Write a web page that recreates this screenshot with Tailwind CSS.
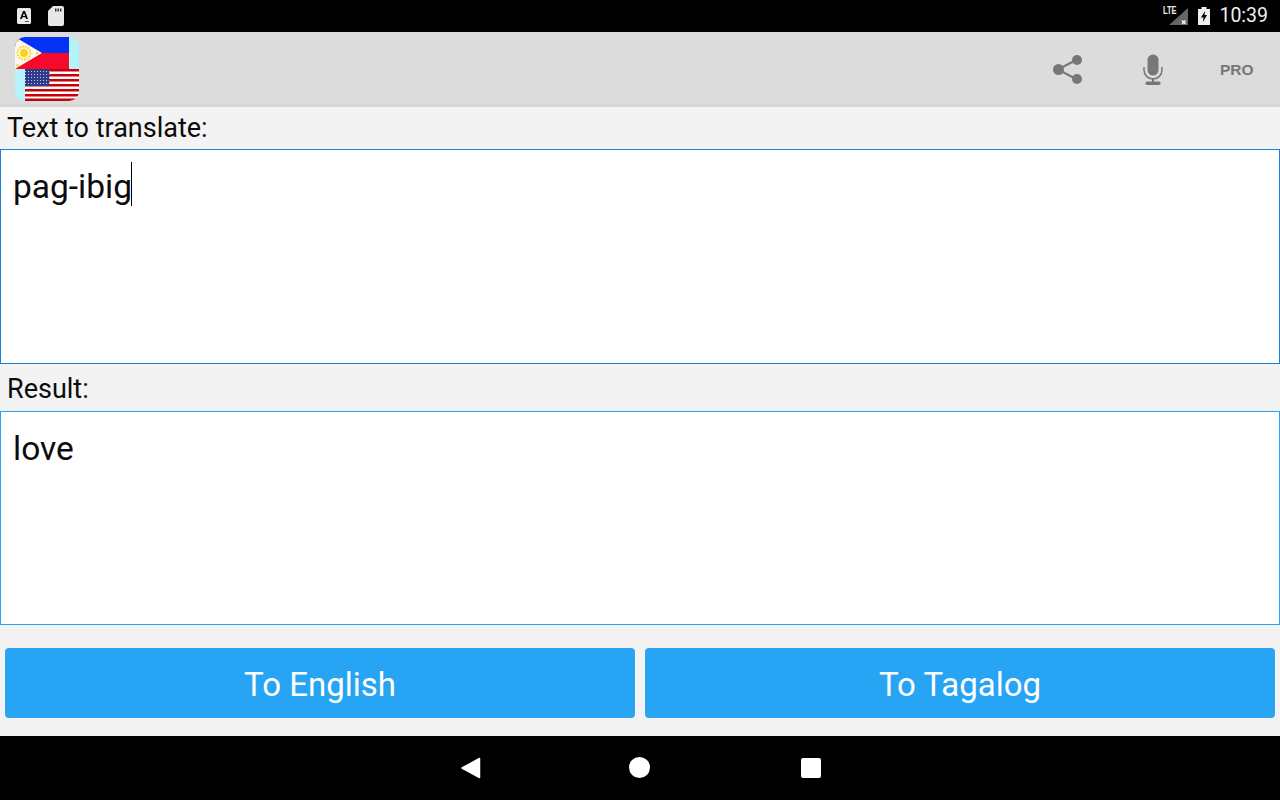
<!DOCTYPE html>
<html><head><meta charset="utf-8"><script src="https://cdn.jsdelivr.net/npm/@tailwindcss/browser@4"></script></head>
<body class="m-0">
<div class="w-[1280px] h-[800px] overflow-hidden flex flex-col bg-[#f3f3f3] font-['Roboto',sans-serif]">
  <div class="h-8 bg-black flex items-center shrink-0 pl-[17px] pr-[12px]">
    <svg width="14" height="16" viewBox="0 0 14 16"><rect width="14" height="16" rx="1.5" fill="#e8e8e8"/><path d="M3 11 6 3h2L11 11H9.2L8.6 9.3H5.4L4.8 11Z M5.9 7.9h2.2L7 4.9Z" fill="#000" fill-rule="evenodd"/><rect x="8" y="13" width="4" height="1" fill="#555"/></svg>
    <svg width="16" height="20" viewBox="0 0 16 20" class="ml-[17px]"><path d="M5 0h9a2 2 0 0 1 2 2v16a2 2 0 0 1-2 2H2a2 2 0 0 1-2-2V5Z" fill="#e8e8e8"/><path d="M7 2.5h1.5v3H7ZM9.5 2.5H11v3H9.5ZM12 2.5h1.5v3H12Z" fill="#333"/></svg>
    <div class="ml-auto flex items-center">
      <div class="relative w-[24px] h-[20px] mr-[7px]">
        <svg width="24" height="20" viewBox="0 0 24 20" class="absolute left-0 top-0"><path d="M21 2V19H2Z" fill="#666"/><path d="M15 14.5l3.5 3.5M18.5 14.5l-3.5 3.5" stroke="#fff" stroke-width="1.4"/></svg>
        <span class="absolute left-[-4px] top-[-1px] text-[10px] leading-[12px] font-bold text-[#eee] font-['Liberation_Sans',sans-serif] scale-x-75 origin-left">LTE</span>
      </div>
      <svg width="12" height="18" viewBox="0 0 12 18" class="mr-[9px]"><path d="M3.5 0h5v2H12v16H0V2h3.5Z" fill="#eee"/><path d="M7 4 3 10.5h2.5L5 15l4-7H6.5Z" fill="#000"/></svg>
      <span class="text-[#eee] text-[19.5px] leading-none">10:39</span>
    </div>
  </div>
  <div class="h-[75px] bg-[#dcdcdc] border-b-[3px] border-[#d6d6d6] flex items-center shrink-0 relative pl-[15px]">
    <svg width="64" height="64" viewBox="0 0 64 64" class="mt-[2px]">
      <defs><clipPath id="c"><rect width="64" height="64" rx="10"/></clipPath>
      <pattern id="s" width="3" height="3" patternUnits="userSpaceOnUse"><rect width="3" height="3" fill="#2f3a8c"/><rect x="1" y="1" width="1" height="1" fill="#c9cdea"/></pattern></defs>
      <g clip-path="url(#c)">
        <rect width="64" height="64" fill="#b5f3fb"/>
        <rect width="54" height="16" fill="#0433f5"/>
        <rect y="16" width="54" height="16" fill="#f50a2c"/>
        <path d="M0 0 27 16 0 32Z" fill="#fff8f0"/>
        <circle cx="9" cy="16" r="4" fill="#fcd116"/>
        <circle cx="9" cy="16" r="6.5" fill="none" stroke="#fcd116" stroke-width="2" stroke-dasharray="1.6 1.2"/>
        <circle cx="2.5" cy="3.5" r="1.3" fill="#fcd116"/><circle cx="2.5" cy="28.5" r="1.3" fill="#fcd116"/><circle cx="22" cy="16" r="1.3" fill="#fcd116"/>
        <rect x="10" y="32" width="54" height="32" fill="#fff"/>
        <g fill="#c8000a"><rect x="10" y="32" width="54" height="2.5"/><rect x="10" y="37" width="54" height="2.5"/><rect x="10" y="42" width="54" height="2.5"/><rect x="10" y="47" width="54" height="2.5"/><rect x="10" y="52" width="54" height="2.5"/><rect x="10" y="57" width="54" height="2.5"/><rect x="10" y="61.5" width="54" height="2.5"/></g>
        <rect x="10" y="32" width="24.5" height="17" fill="url(#s)"/>
      </g>
    </svg>
    <div class="absolute left-[1052px] top-[22px] w-[32px] h-[32px]">
      <svg width="32" height="32" viewBox="0 0 32 32"><path d="M6 15.5 25 5.5M6 15.5 25 25.5" stroke="#777" stroke-width="2"/><circle cx="6.5" cy="15.5" r="5.5" fill="#777"/><circle cx="25" cy="6" r="5" fill="#777"/><circle cx="25" cy="25" r="5" fill="#777"/></svg>
    </div>
    <div class="absolute left-[1143px] top-[22px] w-[21px] h-[32px]">
      <svg width="21" height="32" viewBox="0 0 21 32"><rect x="4.5" y="0.5" width="11" height="21" rx="5.5" fill="#777"/><path d="M1 13v3a9 9 0 0 0 18 0v-3" fill="none" stroke="#777" stroke-width="1.5"/><rect x="9" y="24" width="2" height="4" fill="#777"/><rect x="2.5" y="27.5" width="15" height="3.5" rx="1.7" fill="#777"/></svg>
    </div>
    <span class="absolute left-[1220px] top-[30px] text-[15.5px] leading-[16px] font-bold text-[#777] font-['Liberation_Sans',sans-serif]">PRO</span>
  </div>
  <div class="flex-1 min-h-0 flex flex-col">
    <div class="h-[42px] pl-[7px] pt-[6px] text-[27px] leading-[30px] text-[#0c0c0c] shrink-0">Text to translate:</div>
    <div class="h-[215px] shrink-0 bg-white border border-[#1a80d8] pl-3 pt-[16px] text-[33.5px] leading-[42px] text-[#0c0c0c] flex items-start"><span>pag-ibig</span><span class="w-[1px] h-[44px] bg-black mt-[-4px] ml-[-1px]"></span></div>
    <div class="h-[47px] pl-[7px] pt-[10px] text-[27px] leading-[30px] text-[#0c0c0c] shrink-0">Result:</div>
    <div class="h-[214px] shrink-0 bg-white border border-[#27a5f4] pl-3 pt-[16px] text-[33.5px] leading-[42px] text-[#0c0c0c]">love</div>
    <div class="flex gap-[10px] px-[5px] pt-[23px]">
      <div class="flex-1 h-[70px] rounded-[4px] bg-[#27a5f4] text-white text-[33px] pt-[3px] flex items-center justify-center">To English</div>
      <div class="flex-1 h-[70px] rounded-[4px] bg-[#27a5f4] text-white text-[33px] pt-[3px] flex items-center justify-center">To Tagalog</div>
    </div>
  </div>
  <div class="h-16 bg-black shrink-0 flex items-center justify-center relative">
    <svg width="22" height="24" viewBox="0 0 22 24" class="absolute left-[460px] top-[20px]"><path d="M2 12 19.5 2.5V21.5Z" fill="#fff" stroke="#fff" stroke-width="1.5" stroke-linejoin="round"/></svg>
    <div class="absolute left-[629px] top-[21px] w-[21px] h-[21px] rounded-full bg-white"></div>
    <div class="absolute left-[801px] top-[22px] w-[20px] h-[20px] rounded-[2px] bg-white"></div>
  </div>
</div>
</body></html>
